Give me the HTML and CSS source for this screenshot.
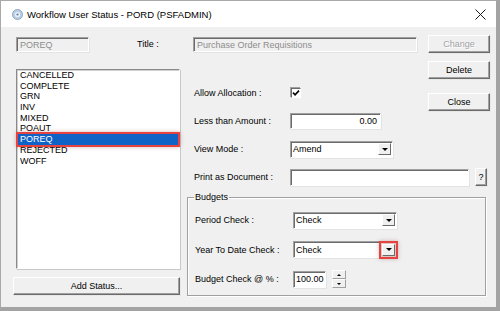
FILE: index.html
```html
<!DOCTYPE html>
<html lang="en">
<head>
    <meta charset="UTF-8">
    <title>Workflow User Status - PORD (PSFADMIN)</title>
    <link rel="stylesheet" href="styles.css">
</head>
<body>

    <div class="window">
        <div class="titlebar">
            <svg class="app-icon" width="11" height="11" viewBox="0 0 11 11">
                <circle cx="5.5" cy="5.5" r="5" fill="#b9cfe4" stroke="#7d97b3" stroke-width="0.8"/>
                <circle cx="5.5" cy="5.5" r="2.6" fill="#e9f1f9"/>
                <circle cx="5.5" cy="5.5" r="1.1" fill="#5a7ea6"/>
            </svg>
            <span class="title-text">Workflow User Status - PORD (PSFADMIN)</span>
            <svg class="close-x" width="11" height="11" viewBox="0 0 11 11">
                <line x1="0.5" y1="0.5" x2="10.5" y2="10.5" stroke="#1a1a1a" stroke-width="1"/>
                <line x1="10.5" y1="0.5" x2="0.5" y2="10.5" stroke="#1a1a1a" stroke-width="1"/>
            </svg>
        </div>

        <div class="content">
            <div class="top-row">
                <div class="field disabled code-field">POREQ</div>
                <span class="title-label">Title :</span>
                <div class="field disabled title-field">Purchase Order Requisitions</div>
                <button class="btn disabled-btn">Change</button>
            </div>

            <div class="main">
                <div class="left">
                    <ul class="listbox">
                        <li>CANCELLED</li>
                        <li>COMPLETE</li>
                        <li>GRN</li>
                        <li>INV</li>
                        <li>MIXED</li>
                        <li>POAUT</li>
                        <li class="selected">POREQ</li>
                        <li>REJECTED</li>
                        <li>WOFF</li>
                    </ul>
                    <button class="btn add-btn">Add Status...</button>
                </div>

                <div class="right">
                    <div class="upper">
                        <div class="form">
                            <div class="row first">
                                <span class="label">Allow Allocation :</span>
                                <span class="checkbox">
                                    <svg width="8" height="8" viewBox="0 0 8 8">
                                        <path d="M1 3.6 L3.1 5.8 L7 1.6" fill="none" stroke="#000" stroke-width="1.6"/>
                                    </svg>
                                </span>
                            </div>
                            <div class="row">
                                <span class="label">Less than Amount :</span>
                                <div class="field amount">0.00</div>
                            </div>
                            <div class="row">
                                <span class="label">View Mode :</span>
                                <div class="field select view-select">
                                    <span>Amend</span>
                                    <span class="drop-btn"><i class="tri-down"></i></span>
                                </div>
                            </div>
                            <div class="row">
                                <span class="label">Print as Document :</span>
                                <div class="field print-field"></div>
                                <button class="btn help-btn">?</button>
                            </div>
                        </div>
                        <div class="btn-col">
                            <button class="btn">Delete</button>
                            <button class="btn close-btn">Close</button>
                        </div>
                    </div>

                    <fieldset class="budgets">
                        <legend>Budgets</legend>
                        <div class="row">
                            <span class="label">Period Check :</span>
                            <div class="field select budget-select">
                                <span>Check</span>
                                <span class="drop-btn"><i class="tri-down"></i></span>
                            </div>
                        </div>
                        <div class="row">
                            <span class="label">Year To Date Check :</span>
                            <div class="field select budget-select">
                                <span>Check</span>
                                <span class="drop-btn marked"><i class="tri-down"></i></span>
                            </div>
                        </div>
                        <div class="row">
                            <span class="label">Budget Check @ % :</span>
                            <div class="field percent">100.00</div>
                            <div class="spinner">
                                <span class="spin-btn"><i class="tri-up"></i></span>
                                <span class="spin-btn"><i class="tri-down small"></i></span>
                            </div>
                        </div>
                    </fieldset>
                </div>
            </div>
        </div>
    </div>

</body>
</html>
```

FILE: styles.css
```css
body {
    margin: 0;
    padding: 0;
    font-family: "Liberation Sans", Arial, sans-serif;
    font-size: 9px;
    color: #000;
    background: #fff;
}

.window {
    width: 500px;
    height: 311px;
    box-sizing: border-box;
    border-top: 1px solid #a9a9a9;
    border-left: 1px solid #a9a9a9;
    border-right: 4px solid #a3a3a3;
    border-bottom: 4px solid #a3a3a3;
    display: flex;
    flex-direction: column;
    background-color: #f0f0f0;
    overflow: hidden;
}

.titlebar {
    height: 26px;
    flex: none;
    background-color: #fff;
    display: flex;
    align-items: center;
    padding-left: 11px;
    padding-right: 10px;
}

.app-icon {
    flex: none;
    margin-right: 4px;
}

.title-text {
    font-size: 9.5px;
    flex: 1 1 auto;
}

.close-x {
    display: block;
    flex: none;
}

.content {
    flex: 1;
    padding: 8px 0 0 12px;
}

/* generic sunken field */
.field {
    box-sizing: border-box;
    background-color: #fff;
    border: 1px solid;
    border-color: #a0a0a0 #fff #fff #a0a0a0;
    box-shadow: inset 1px 1px 0 #6b6b6b, 1px 1px 0 #e3e3e3;
    height: 16px;
    line-height: 14px;
    padding: 0 3px;
    white-space: nowrap;
    overflow: hidden;
}

.field.disabled {
    background-color: #f0f0f0;
    color: #8d8d8d;
}

.btn {
    box-sizing: border-box;
    font-family: inherit;
    font-size: 9px;
    height: 18px;
    width: 62px;
    padding: 0;
    background-color: #f0f0f0;
    border: 1px solid;
    border-color: #fff #6b6b6b #6b6b6b #fff;
    box-shadow: inset -1px -1px 0 #a0a0a0, 1px 1px 0 #e8e8e8;
    color: #000;
}

.disabled-btn {
    color: #a3a3a3;
    text-shadow: 1px 1px 0 #fff;
}

.top-row {
    display: flex;
    align-items: center;
    height: 18px;
}

.code-field {
    width: 73px;
    height: 15px;
    margin-left: 3px;
}

.title-label {
    margin-left: 48px;
    width: 56px;
}

.title-field {
    width: 224px;
    height: 15px;
}

.top-row .btn {
    margin-left: 11px;
}

.main {
    display: flex;
    margin-top: 8px;
}

.left {
    width: 167px;
    flex: none;
    display: flex;
    flex-direction: column;
}

.listbox {
    list-style: none;
    margin: 8px 0 0 3px;
    padding: 0 1px;
    width: 164px;
    height: 200px;
    box-sizing: border-box;
    background-color: #fff;
    border: 1px solid;
    border-color: #8a8a8a #fff #fff #8a8a8a;
    box-shadow: inset 1px 1px 0 #d0d0d0, 1px 1px 0 #c8c8c8;
}

.listbox li {
    height: 10.7px;
    line-height: 11px;
    padding-left: 2px;
}

.listbox li.selected {
    background-color: #0f62c6;
    color: #fff;
    outline: 2px solid #e6423f;
    box-shadow: 0 0 4px 2px rgba(120, 40, 40, 0.35);
    position: relative;
}

.add-btn {
    width: 167px;
    margin-top: 8px;
}

.right {
    margin-left: 7px;
    width: 303px;
    flex: none;
}

/* form and button column share one cell; buttons sit at the right */
.upper {
    display: grid;
    grid-template-columns: 1fr;
}

.form,
.btn-col {
    grid-area: 1 / 1;
}

.form {
    display: flex;
    flex-direction: column;
    gap: 10px;
}

.btn-col {
    justify-self: end;
    align-self: start;
    width: 62px;
    display: flex;
    flex-direction: column;
    gap: 14px;
}

.row {
    display: flex;
    align-items: center;
    height: 18px;
}

.form .row.first {
    margin-top: 23px;
}

.label {
    box-sizing: border-box;
    width: 103px;
    padding-left: 7px;
    flex: none;
}

.checkbox {
    width: 10px;
    height: 10px;
    box-sizing: border-box;
    margin-left: 1px;
    background-color: #fff;
    border: 1px solid;
    border-color: #6b6b6b #fff #fff #6b6b6b;
    box-shadow: -1px -1px 0 #a0a0a0;
    display: flex;
    align-items: center;
    justify-content: center;
}

.amount {
    width: 91px;
    text-align: right;
}

.select {
    display: flex;
    align-items: center;
    justify-content: space-between;
    padding: 0 1px 0 2px;
    overflow: visible;
}

.view-select {
    width: 103px;
    height: 17px;
}

.drop-btn {
    width: 13px;
    height: 12px;
    box-sizing: border-box;
    background-color: #f0f0f0;
    border: 1px solid;
    border-color: #fff #6b6b6b #6b6b6b #fff;
    display: flex;
    align-items: center;
    justify-content: center;
}

.drop-btn.marked {
    outline: 2px solid #e6423f;
    outline-offset: 1px;
    box-shadow: 0 0 4px 3px rgba(120, 40, 40, 0.3);
}

.tri-down {
    width: 0;
    height: 0;
    border-left: 3px solid transparent;
    border-right: 3px solid transparent;
    border-top: 3px solid #000;
}

.tri-up {
    width: 0;
    height: 0;
    border-left: 2px solid transparent;
    border-right: 2px solid transparent;
    border-bottom: 2px solid #000;
}

.tri-down.small {
    border-left-width: 2px;
    border-right-width: 2px;
    border-top-width: 2px;
}

.print-field {
    width: 179px;
    height: 17px;
}

.help-btn {
    width: 12px;
    height: 18px;
    margin-left: 6px;
}

.budgets {
    margin: 6px 0 0 0;
    width: 299px;
    height: 104px;
    box-sizing: border-box;
    padding: 9px 0 0 0;
    border: 1px solid #a0a0a0;
    box-shadow: inset 1px 1px 0 #fff, 1px 1px 0 #fff;
}

.budgets legend {
    padding: 0 1px;
    margin-left: 6px;
}

.budgets .row {
    margin-bottom: 11.5px;
}

.budgets .label {
    width: 105px;
    padding-left: 7px;
}

.budget-select {
    width: 104px;
    height: 17px;
}

.percent {
    width: 33px;
    height: 17px;
    padding: 0 2px;
}

.spinner {
    margin-left: 6px;
    display: flex;
    flex-direction: column;
}

.spin-btn {
    width: 14px;
    height: 9px;
    box-sizing: border-box;
    background-color: #f0f0f0;
    border: 1px solid;
    border-color: #fff #a0a0a0 #a0a0a0 #fff;
    display: flex;
    align-items: center;
    justify-content: center;
}
```
